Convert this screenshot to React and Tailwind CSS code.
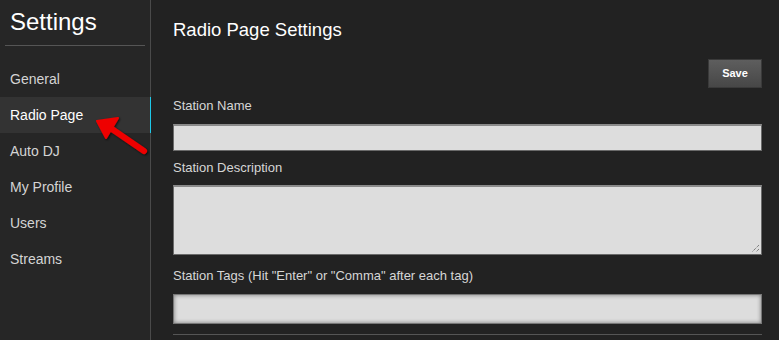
import React from 'react';

const navItems = ["General", "Radio Page", "Auto DJ", "My Profile", "Users", "Streams"];

export default function App() {
  return (
    <div className="w-[779px] h-[340px] flex bg-[#222222] overflow-hidden font-['Liberation_Sans',Arial,sans-serif]">
      <aside className="relative w-[151px] shrink-0 bg-[#262626] border-r border-[#4a4a4a]">
        <h1 className="px-[10px] pt-[7px] pb-[8px] text-[24px] leading-[30px] text-white">Settings</h1>
        <div className="mx-[5px] h-px bg-[#555555]" />
        <nav className="mt-[15px] flex flex-col">
          {navItems.map((item) => (
            <div
              key={item}
              className={
                item === "Radio Page"
                  ? "h-[36px] pl-[10px] flex items-center text-[14px] text-white bg-[#333333] -mr-px border-r border-[#1ec8e8]"
                  : "h-[36px] pl-[10px] flex items-center text-[14px] text-[#d4d4d4]"
              }
            >
              {item}
            </div>
          ))}
        </nav>
        <svg className="absolute left-[92px] top-[111px]" width="60" height="48" viewBox="0 0 60 48">
          <defs>
            <filter id="sh" x="-20%" y="-20%" width="140%" height="140%">
              <feDropShadow dx="1" dy="1" stdDeviation="1" floodColor="#000" floodOpacity="0.7" />
            </filter>
          </defs>
          <g filter="url(#sh)">
            <line x1="17" y1="16" x2="52" y2="40" stroke="#ee0000" strokeWidth="6" strokeLinecap="round" />
            <polygon points="5,10 26,7 14,27" fill="#ee0000" stroke="#ee0000" strokeWidth="2" strokeLinejoin="round" />
          </g>
        </svg>
      </aside>

      <main className="flex-1 pl-[22px] pr-[17px]">
        <h2 className="pt-[19px] text-[18.5px] leading-[22px] text-white">Radio Page Settings</h2>
        <div className="mt-[18px] flex justify-end">
          <button className="w-[54px] h-[29px] text-[11px] font-bold text-white border border-[#3a3a3a] bg-gradient-to-b from-[#5e5e5e] to-[#474747]">
            Save
          </button>
        </div>
        <label className="block mt-[10px] text-[13px] leading-[16px] text-[#d6d6d6]">Station Name</label>
        <div className="mt-[10px] h-[27px] bg-[#dddddd] border border-[#6a6a6a] border-t-2 border-t-[#8a8a8a]" />
        <label className="block mt-[9px] text-[13px] leading-[16px] text-[#d6d6d6]">Station Description</label>
        <div className="relative mt-[9px] h-[70px] bg-[#dddddd] border border-[#6a6a6a] border-t-2 border-t-[#8a8a8a]">
          <svg className="absolute right-[1px] bottom-[1px]" width="9" height="9" viewBox="0 0 9 9">
            <line x1="8" y1="1" x2="1" y2="8" stroke="#555" strokeDasharray="1 1" />
            <line x1="8" y1="5" x2="5" y2="8" stroke="#555" strokeDasharray="1 1" />
          </svg>
        </div>
        <label className="block mt-[13px] text-[13px] leading-[16px] text-[#d6d6d6]">Station Tags (Hit "Enter" or "Comma" after each tag)</label>
        <div className="mt-[10px] h-[30px] bg-[#dddddd] border border-[#777777] shadow-[inset_0_0_4px_rgba(0,0,0,0.45)]" />
        <div className="mt-[10px] h-px bg-[#555555]" />
      </main>
    </div>
  );
}
